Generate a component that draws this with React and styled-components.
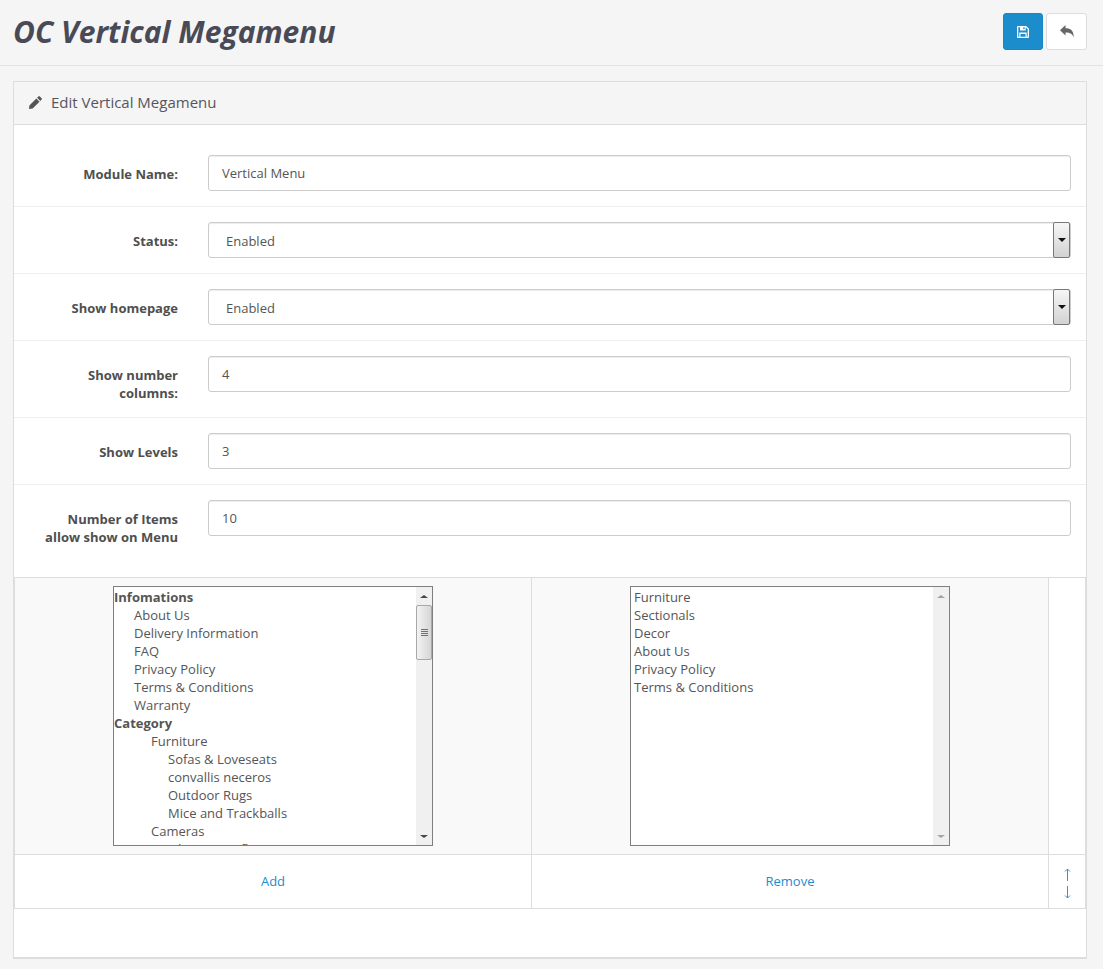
import React from 'react'
import styled, { createGlobalStyle } from 'styled-components'

const GlobalStyle = createGlobalStyle`
  body {
    margin: 0;
    background: #f5f5f5;
    font-family: "Open Sans", sans-serif;
    font-size: 13px;
    color: #555;
  }
`

// Header
const PageHeader = styled.header`
  display: flex;
  justify-content: space-between;
  align-items: center;
  height: 63px;
  padding: 0 13px 2px;
  margin-bottom: 15px;
  border-bottom: 1px solid #e2e2e2;
`

const PageTitle = styled.h1`
  margin: 0;
  font-size: 30px;
  line-height: 1;
  font-weight: 700;
  font-style: italic;
  color: #4a4a57;
`

const Actions = styled.div`
  display: flex;
  gap: 3px;
  margin-right: 3px;
`

const ActionButton = styled.button`
  width: ${p => (p.$primary ? '40px' : '41px')};
  height: 37px;
  padding: 0;
  display: flex;
  align-items: center;
  justify-content: center;
  border-radius: 3px;
  border: 1px solid ${p => (p.$primary ? '#1a87c2' : '#ddd')};
  background: ${p => (p.$primary ? '#1b8dcc' : '#fff')};
`

// Panel
const Panel = styled.section`
  margin: 0 16px 0 13px;
  height: 878px;
  box-sizing: border-box;
  background: #fff;
  border: 1px solid #ddd;
  border-bottom-width: 2px;
`

const PanelHeading = styled.div`
  display: flex;
  align-items: center;
  gap: 9px;
  height: 40px;
  padding: 0 0 2px 15px;
  background: #f5f5f5;
  border-bottom: 1px solid #ddd;
  font-size: 15px;
  color: #555560;
`

const Row = styled.div`
  display: grid;
  grid-template-columns: 149px 863px;
  column-gap: 30px;
  padding: ${p => (p.$first ? '30px' : '15px')} 15px 15px;
  border-bottom: ${p => (p.$last ? 'none' : '1px solid #eee')};
  margin-bottom: ${p => (p.$last ? '16px' : '0')};
`

const Label = styled.label`
  padding-top: 10px;
  text-align: right;
  font-weight: 700;
  line-height: 18px;
  color: #4f4f4f;
`

const TextInput = styled.div`
  height: 36px;
  box-sizing: border-box;
  padding: 0 13px;
  display: flex;
  align-items: center;
  background: #fff;
  border: 1px solid #ccc;
  border-radius: 3px;
  box-shadow: inset 0 1px 1px rgba(0, 0, 0, 0.075);
  color: #555;
`

const SelectBox = styled(TextInput)`
  padding: 2px 0 0 17px;
  justify-content: space-between;
`

const SelectArrow = styled.span`
  width: 17px;
  height: 36px;
  margin-top: -2px;
  box-sizing: border-box;
  display: flex;
  align-items: center;
  justify-content: center;
  border: 1px solid #777;
  border-radius: 2px;
  background: linear-gradient(#f6f6f6, #d2d2d2);
  &::after {
    content: '';
    border-top: 4px solid #111;
    border-left: 4px solid transparent;
    border-right: 4px solid transparent;
  }
`

// Menu item picker
const Picker = styled.div`
  display: grid;
  grid-template-columns: 517px 517px 36px;
  grid-template-rows: 277px 53px;
  border: 1px solid #ddd;
`

const ListCell = styled.div`
  display: flex;
  justify-content: center;
  align-items: flex-start;
  padding-top: 8px;
  background: ${p => (p.$plain ? '#fff' : '#f9f9f9')};
  border-right: ${p => (p.$end ? 'none' : '1px solid #ddd')};
  border-bottom: 1px solid #ddd;
`

const ActionCell = styled.div`
  display: flex;
  flex-direction: column;
  align-items: center;
  justify-content: center;
  gap: 5px;
  padding: ${p => (p.$end ? '4px 0 0' : '0 0 2px')};
  border-right: ${p => (p.$end ? 'none' : '1px solid #ddd')};
`

const Listbox = styled.div`
  width: 320px;
  height: 260px;
  box-sizing: border-box;
  display: flex;
  background: #fff;
  border: 1px solid #7f7f7f;
`

const Options = styled.ul`
  flex: 1;
  margin: 0;
  padding: 1px 0 0;
  list-style: none;
  overflow: hidden;
`

const Option = styled.li`
  height: 18px;
  line-height: 18px;
  white-space: nowrap;
  padding-left: ${p => p.$indent || 0}px;
  font-weight: ${p => (p.$group ? 700 : 400)};
`

const Scrollbar = styled.div`
  width: 16px;
  display: flex;
  flex-direction: column;
  background: #f0f0f0;
`

const ScrollButton = styled.span`
  height: 18px;
  flex: none;
  display: flex;
  align-items: center;
  justify-content: center;
  &::after {
    content: '';
    border-left: 4px solid transparent;
    border-right: 4px solid transparent;
    ${p => (p.$down ? 'border-top' : 'border-bottom')}: 3px solid ${p => (p.$off ? '#a3a3a3' : '#444')};
  }
`

const ScrollTrack = styled.div`
  flex: 1;
`

const ScrollThumb = styled.div`
  height: 55px;
  box-sizing: border-box;
  display: flex;
  flex-direction: column;
  align-items: center;
  justify-content: center;
  gap: 1px;
  border: 1px solid #a8a8a8;
  border-radius: 2px;
  background: linear-gradient(90deg, #f2f2f2, #d6d6d6);
`

const Grip = styled.i`
  display: block;
  width: 7px;
  height: 1px;
  background: #707070;
`

const LinkText = styled.a`
  color: #1b8dcc;
  text-decoration: none;
`

const left = [
  { t: 'Infomations', group: true },
  { t: 'About Us', i: 20 },
  { t: 'Delivery Information', i: 20 },
  { t: 'FAQ', i: 20 },
  { t: 'Privacy Policy', i: 20 },
  { t: 'Terms & Conditions', i: 20 },
  { t: 'Warranty', i: 20 },
  { t: 'Category', group: true },
  { t: 'Furniture', i: 37 },
  { t: 'Sofas & Loveseats', i: 54 },
  { t: 'convallis neceros', i: 54 },
  { t: 'Outdoor Rugs', i: 54 },
  { t: 'Mice and Trackballs', i: 54 },
  { t: 'Cameras', i: 37 },
  { t: 'Olympus Reflex', i: 54 },
]

const right = ['Furniture', 'Sectionals', 'Decor', 'About Us', 'Privacy Policy', 'Terms & Conditions']

const fields = [
  { label: 'Module Name:', value: 'Vertical Menu', first: true },
  { label: 'Status:', value: 'Enabled', select: true },
  { label: 'Show homepage', value: 'Enabled', select: true },
  { label: <>Show number<br />columns:</>, value: '4' },
  { label: 'Show Levels', value: '3' },
  { label: <>Number of Items<br />allow show on Menu</>, value: '10', last: true },
]

const App = () => (
  <>
    <GlobalStyle />
    <PageHeader>
      <PageTitle>OC Vertical Megamenu</PageTitle>
      <Actions>
        <ActionButton $primary aria-label="Save">
          <svg width="12" height="12" viewBox="0 0 12 12">
            <path
              fill="#fff"
              fillRule="evenodd"
              d="M1 0h8.2L12 2.8V11a1 1 0 0 1-1 1H1a1 1 0 0 1-1-1V1a1 1 0 0 1 1-1zm.3 1.3v9.4h1V6.6h7.4v4.1h1V3.3L8.7 1.3v3.2H3V1.3zM3.5 8v2.7h5V8zM6.300 1.300v2h1.300v-2z"
            />
          </svg>
        </ActionButton>
        <ActionButton aria-label="Back">
          <svg width="14" height="13" viewBox="0 0 14 13">
            <path fill="#666" d="M5.5 0v3.2C10.500 3.200 14 5.500 13.600 12.600 12.600 9 10.500 7.400 5.500 7.400v3.200L0 5.300z" />
          </svg>
        </ActionButton>
      </Actions>
    </PageHeader>
    <Panel>
      <PanelHeading>
        <svg width="13" height="13" viewBox="0 0 13 13">
          <path fill="#555" d="M9.400.4a1 1 0 0 1 1.400 0l1.800 1.800a1 1 0 0 1 0 1.400l-1.300 1.300-3.200-3.200zM7.300 2.500l3.200 3.200-6.900 6.900-3.600.4.400-3.600z" />
        </svg>
        Edit Vertical Megamenu
      </PanelHeading>
      <div>
        {fields.map((f, n) => (
          <Row key={n} $first={f.first} $last={f.last}>
            <Label>{f.label}</Label>
            {f.select ? (
              <SelectBox>
                {f.value}
                <SelectArrow />
              </SelectBox>
            ) : (
              <TextInput>{f.value}</TextInput>
            )}
          </Row>
        ))}
      </div>
      <Picker>
        <ListCell>
          <Listbox>
            <Options>
              {left.map(o => (
                <Option key={o.t} $group={o.group} $indent={o.i}>{o.t}</Option>
              ))}
            </Options>
            <Scrollbar>
              <ScrollButton />
              <ScrollThumb>
                <Grip /><Grip /><Grip /><Grip />
              </ScrollThumb>
              <ScrollTrack />
              <ScrollButton $down />
            </Scrollbar>
          </Listbox>
        </ListCell>
        <ListCell>
          <Listbox>
            <Options>
              {right.map(t => (
                <Option key={t} $indent={3}>{t}</Option>
              ))}
            </Options>
            <Scrollbar>
              <ScrollButton $off />
              <ScrollTrack />
              <ScrollButton $down $off />
            </Scrollbar>
          </Listbox>
        </ListCell>
        <ListCell $plain $end />
        <ActionCell><LinkText href="#">Add</LinkText></ActionCell>
        <ActionCell><LinkText href="#">Remove</LinkText></ActionCell>
        <ActionCell $end>
          <svg width="7" height="13" viewBox="0 0 7 13">
            <path fill="none" stroke="#2f97d2" d="M3.500 13V1M1 3.500L3.500 1 6 3.500" />
          </svg>
          <svg width="7" height="13" viewBox="0 0 7 13">
            <path fill="none" stroke="#2f97d2" d="M3.500 0v12M1 9.500L3.500 12 6 9.500" />
          </svg>
        </ActionCell>
      </Picker>
    </Panel>
  </>
)

export default App
